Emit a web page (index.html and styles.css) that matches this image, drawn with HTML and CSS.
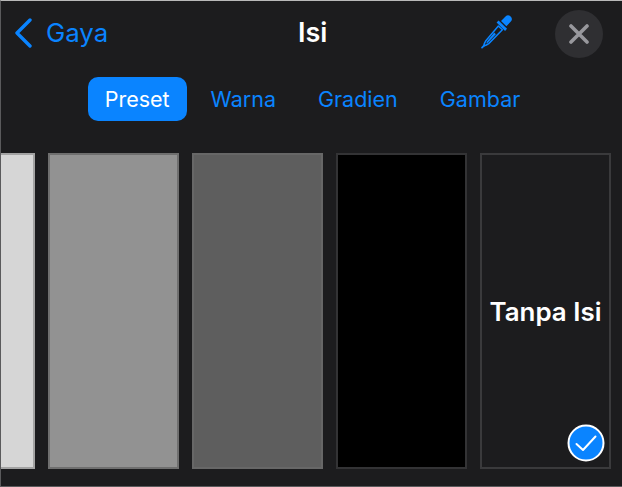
FILE: index.html
```html
<!DOCTYPE html>
<html>
<head>
    <meta charset="utf-8">
    <title>Isi</title>
    <link rel="stylesheet" href="styles.css">
</head>
<body>
<div class="panel">
    <div class="header">
        <a class="back">
            <svg class="chevron" width="18" height="32" viewBox="0 0 18 32"><path d="M16 3 L3 16 L16 29" fill="none" stroke="#0a84ff" stroke-width="3.4" stroke-linecap="round" stroke-linejoin="round"/></svg>
            <span>Gaya</span>
        </a>
        <div class="title">Isi</div>
        <div class="actions">
            <svg class="dropper" width="38" height="38" viewBox="0 0 34 34">
                <path d="M24.6 3.2 a3.2 3.2 0 0 1 4.6 4.6 L25.4 11.8 L20.6 7.2 Z" fill="#0a84ff"/>
                <path d="M18.4 6.6 L26 14.2 L24.2 16 L16.6 8.4 Z" fill="#0a84ff"/>
                <path d="M18.2 11.6 L21.8 15 L9.6 27.4 C8 28.6 6.4 29.2 5 29.6 C5.4 28 6 26.2 7 24.8 Z" fill="none" stroke="#0a84ff" stroke-width="1.3" stroke-linejoin="round"/>
                <path d="M14.5 17.5 L16 19 L9 26.5 L7.4 27.3 L8 25.6 Z" fill="#0a84ff"/>
                <path d="M5.6 29 L3.6 31" stroke="#0a84ff" stroke-width="1.6" stroke-linecap="round"/>
            </svg>
            <button class="close">
                <svg width="20" height="20" viewBox="0 0 20 20"><path d="M2 2 L18 18 M18 2 L2 18" stroke="#98989d" stroke-width="3.6" stroke-linecap="round"/></svg>
            </button>
        </div>
    </div>
    <div class="tabs">
        <div class="tab active">Preset</div>
        <div class="tab">Warna</div>
        <div class="tab">Gradien</div>
        <div class="tab">Gambar</div>
    </div>
    <div class="swatches">
        <div class="swatch cut"></div>
        <div class="swatch mid"></div>
        <div class="swatch dark"></div>
        <div class="swatch black"></div>
        <div class="swatch none">
            Tanpa Isi
            <svg class="check" width="38" height="38" viewBox="0 0 38 38">
                <circle cx="19" cy="19" r="17.5" fill="#0a84ff" stroke="#fff" stroke-width="2"/>
                <path d="M9.5 20 L16 26 L28.5 12.5" fill="none" stroke="#fff" stroke-width="2" stroke-linecap="round" stroke-linejoin="round"/>
            </svg>
        </div>
    </div>
</div>
</body>
</html>
```

FILE: styles.css
```css
html, body {
    margin: 0;
    padding: 0;
}

body {
    font-family: Inter, "Liberation Sans", sans-serif;
    background: #1c1c1e;
}

.panel {
    width: 622px;
    height: 487px;
    box-sizing: border-box;
    overflow: hidden;
    background: #1c1c1e;
    border-top: 1px solid #b9b9b9;
    border-left: 1px solid #5a5a5c;
    border-bottom: 1px solid #5a5a5c;
}

.header {
    display: grid;
    grid-template-columns: 284px auto 1fr;
    align-items: center;
    height: 65px;
    padding: 0 19px 0 13px;
}

.back {
    display: flex;
    align-items: center;
    gap: 14px;
    margin-bottom: 2px;
    color: #0a84ff;
    font-size: 25.8px;
}

.title {
    margin-bottom: 2px;
    color: #fff;
    font-size: 27px;
    font-weight: 600;
}

.actions {
    display: flex;
    align-items: center;
    justify-content: flex-end;
    gap: 39px;
}

.dropper {
    margin-bottom: 3px;
}

.close {
    display: flex;
    align-items: center;
    justify-content: center;
    width: 48px;
    height: 48px;
    padding: 0;
    border: 0;
    border-radius: 50%;
    background: #2f2f32;
}

.tabs {
    display: flex;
    justify-content: center;
    height: 44px;
    margin-top: 11px;
    padding-left: 6px;
}

.tab {
    display: flex;
    align-items: center;
    padding: 0 21px;
    color: #0a84ff;
    font-size: 21.5px;
    border-radius: 10px;
}

.tab.active {
    margin-right: 3px;
    padding: 0 17px;
    color: #fff;
    background: #0a84ff;
}

.swatches {
    display: flex;
    gap: 13px;
    margin-top: 32px;
}

.swatch {
    flex: none;
    width: 131px;
    height: 316px;
    box-sizing: border-box;
    border: 2px solid #6e6e6e;
}

.swatch.cut {
    width: 34px;
    background: #d6d6d6;
    border-color: #a3a3a3;
    border-left: 0;
}

.swatch.mid {
    background: #929292;
    border-color: #6f6f6f;
}

.swatch.dark {
    background: #5e5e5e;
    border-color: #676767;
}

.swatch.black {
    background: #000;
    border-color: #333335;
}

.swatch.none {
    position: relative;
    display: flex;
    align-items: center;
    justify-content: center;
    color: #fff;
    font-size: 25.9px;
    font-weight: 600;
    white-space: nowrap;
    background: #1c1c1e;
    border-color: #3a3a3c;
}

.check {
    position: absolute;
    right: 4px;
    bottom: 5px;
}
```
